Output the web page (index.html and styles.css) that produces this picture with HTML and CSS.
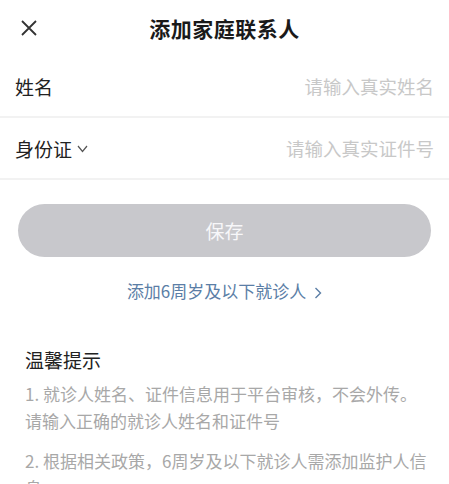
FILE: index.html
```html
<!DOCTYPE html>
<html>
<head>
<meta charset="utf-8">
    <title>添加家庭联系人</title>
    <link rel="stylesheet" href="styles.css">
</head>
<body>
    <div class="header">
        <div class="close">
            <svg width="16" height="16" viewBox="0 0 16 16">
                <path d="M1 1 L15 15 M15 1 L1 15" stroke="#333" stroke-width="1.8" fill="none" />
            </svg>
        </div>
        <div class="title">添加家庭联系人</div>
        <div></div>
    </div>

    <div class="form">
        <div class="row">
            <span class="label">姓名</span>
            <span class="placeholder">请输入真实姓名</span>
        </div>
        <div class="row">
            <span class="label">身份证<svg class="chevron" width="11" height="8" viewBox="0 0 11 8"><path d="M1 1 L5.5 6.5 L10 1" stroke="#555" stroke-width="1.2" fill="none" /></svg></span>
            <span class="placeholder">请输入真实证件号</span>
        </div>
    </div>

    <div class="save">保存</div>

    <div class="link">添加6周岁及以下就诊人
        <svg width="8" height="12" viewBox="0 0 8 12"><path d="M1.5 1 L6.5 6 L1.5 11" stroke="#5b7ea6" stroke-width="1.4" fill="none" /></svg>
    </div>

    <div class="tips">
        <div class="tips-title">温馨提示</div>
        <p>1. 就诊人姓名、证件信息用于平台审核，不会外传。<br>请输入正确的就诊人姓名和证件号</p>
        <p>2. 根据相关政策，6周岁及以下就诊人需添加监护人信息</p>
    </div>
</body>
</html>
```

FILE: styles.css
```css
body {
    margin: 0;
    background: #fff;
    font-family: "Noto Sans CJK SC", "Noto Sans", sans-serif;
    color: #222;
}
.header {
    display: grid;
    grid-template-columns: 1fr auto 1fr;
    align-items: center;
    height: 56px;
}
.close {
    padding-left: 21px;
    display: flex;
    align-items: center;
}
.title {
    font-size: 21px;
    font-weight: bold;
    color: #1a1a1a;
    letter-spacing: 0.5px;
}
.row {
    display: flex;
    justify-content: space-between;
    align-items: center;
    height: 60px;
    padding: 0 15px;
    border-bottom: 2px solid #f2f2f2;
}
.label {
    font-size: 19px;
    color: #222;
    display: flex;
    align-items: center;
}
.chevron {
    margin-left: 5px;
    margin-top: 2px;
}
.placeholder {
    font-size: 18.5px;
    color: #c8c8c8;
}
.save {
    margin: 24px 18px 0;
    height: 53px;
    border-radius: 27px;
    background: #c8c8cc;
    color: #f7f7f9;
    font-size: 19px;
    display: flex;
    align-items: center;
    justify-content: center;
}
.link {
    margin-top: 22px;
    text-align: center;
    font-size: 17px;
    line-height: 24px;
    color: #5b7ea6;
}
.link svg {
    margin-left: 4px;
    vertical-align: -1px;
}
.tips {
    margin-top: 44px;
    padding: 0 15px 0 25px;
}
.tips-title {
    font-size: 19px;
    line-height: 26px;
    color: #222;
}
.tips p {
    margin: 7px 0 13px;
    font-size: 17px;
    line-height: 27px;
    color: #a8a8a8;
}
```
